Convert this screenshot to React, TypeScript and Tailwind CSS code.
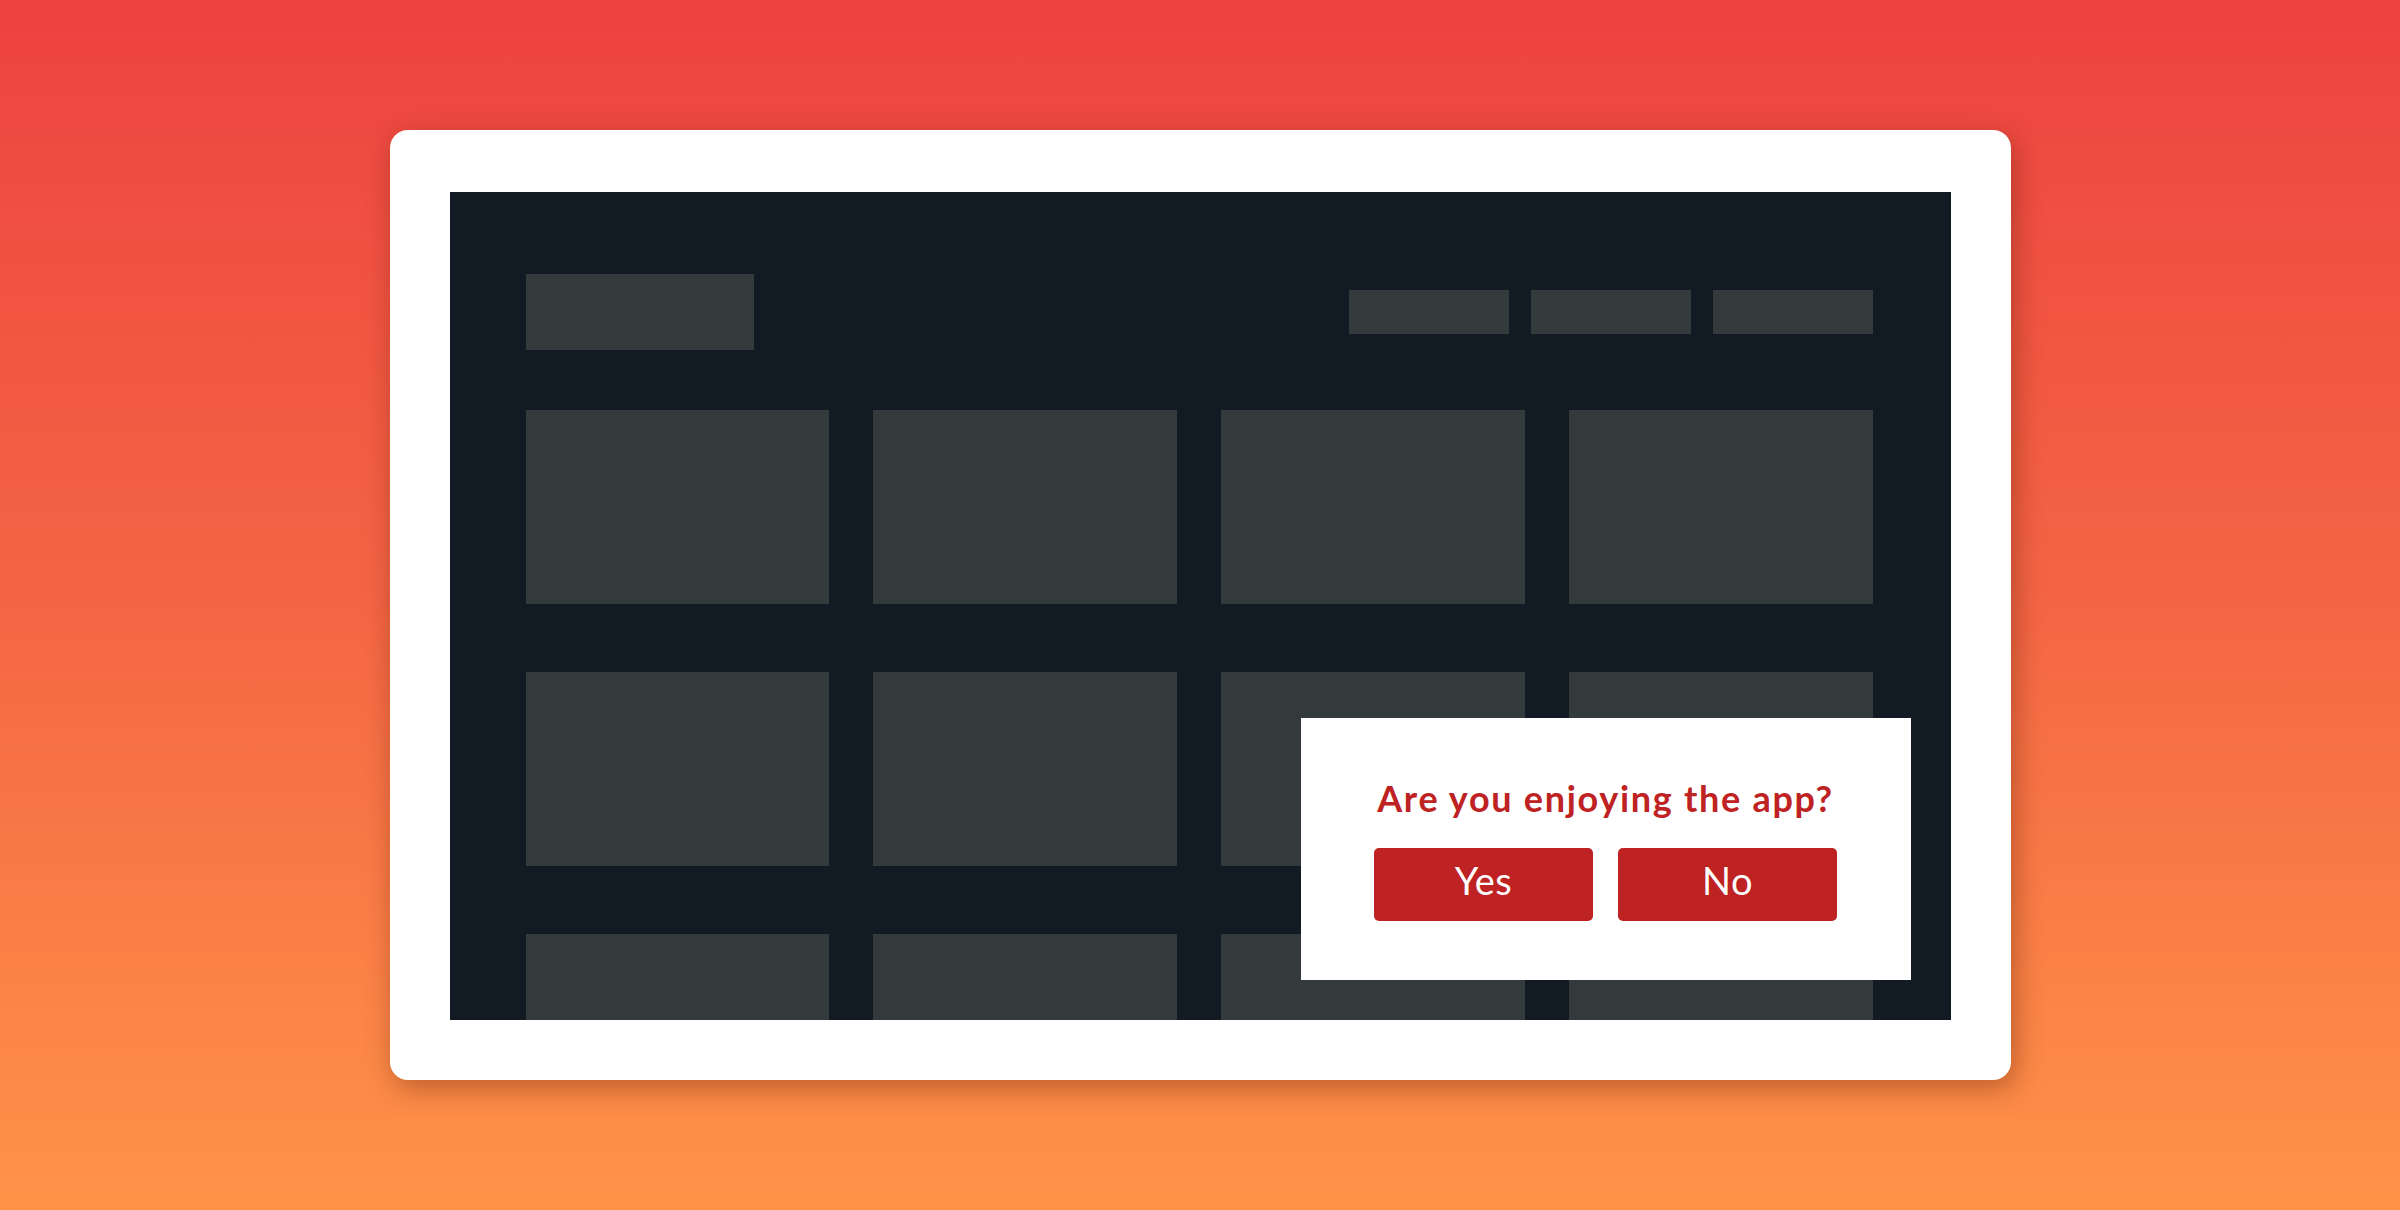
import React from "react";

const tiles = Array.from({ length: 12 });

function NavBlocks() {
  return (
    <div className="flex gap-[22px]">
      <div className="h-[44px] w-[160px] bg-[#323a3c]" />
      <div className="h-[44px] w-[160px] bg-[#323a3c]" />
      <div className="h-[44px] w-[160px] bg-[#323a3c]" />
    </div>
  );
}

function FeedbackDialog() {
  return (
    <div className="absolute right-[40px] bottom-[40px] flex h-[262px] w-[610px] flex-col items-center bg-white pt-[58px]">
      <h2 className="text-[36px] leading-[44px] font-bold tracking-[1.7px] text-[#be2222]">
        Are you enjoying the app?
      </h2>
      <div className="mt-[28px] flex gap-[25px]">
        <button className="flex h-[73px] w-[219px] items-center justify-center rounded-[5px] bg-[#be2222] pb-[10px] text-[38px] leading-none tracking-[0.5px] text-white">
          Yes
        </button>
        <button className="flex h-[73px] w-[219px] items-center justify-center rounded-[5px] bg-[#be2222] pb-[10px] text-[38px] leading-none tracking-[0.5px] text-white">
          No
        </button>
      </div>
    </div>
  );
}

export default function App() {
  return (
    <main
      className="flex h-[1210px] w-full items-center justify-center bg-gradient-to-b from-[#ed4140] via-[#f46544] to-[#ff9348]"
      style={{ fontFamily: "Lato, 'Open Sans', sans-serif" }}
    >
      <div className="h-[950px] w-[1621px] rounded-[18px] bg-white px-[60px] pt-[62px] pb-[60px] shadow-[4px_8px_28px_rgba(90,30,0,0.4)]">
        {/* mocked app screen */}
        <div className="relative h-[828px] w-full overflow-hidden bg-[#121b23] pt-[82px] pr-[78px] pl-[76px]">
          <header className="flex items-center justify-between">
            <div className="h-[76px] w-[228px] bg-[#323a3c]" />
            <NavBlocks />
          </header>

          <div className="mt-[60px] grid grid-cols-4 gap-x-[44px] gap-y-[68px]">
            {tiles.map((_, i) => (
              <div key={i} className="h-[194px] bg-[#323a3c]" />
            ))}
          </div>

          <FeedbackDialog />
        </div>
      </div>
    </main>
  );
}
